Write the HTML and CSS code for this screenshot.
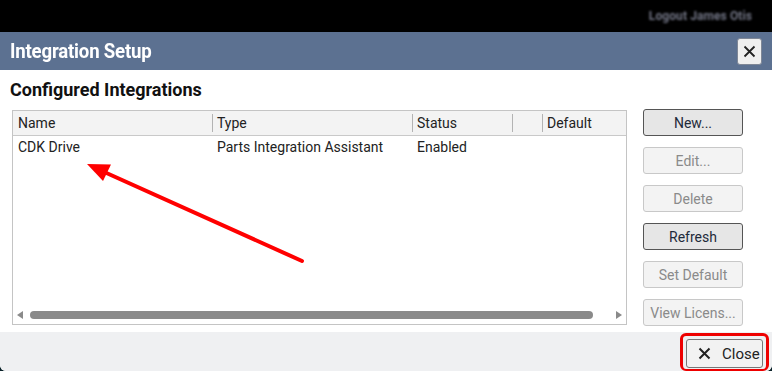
FILE: index.html
```html
<!DOCTYPE html>
<html lang="en">
<head>
  <meta charset="UTF-8">
  <title>Integration Setup</title>
  <link rel="stylesheet" href="styles.css">
</head>
<body>
  <div class="topbar">
    <span class="user">Logout James Otis</span>
  </div>

  <div class="dialog">
    <div class="titlebar">
      <h1><span>Integration Setup</span></h1>
      <button class="x-btn" aria-label="Close">
        <svg width="13" height="13" viewBox="0 0 13 13"><path d="M1.5 1.5 L11.5 11.5 M11.5 1.5 L1.5 11.5" stroke="#222" stroke-width="1.8" fill="none"/></svg>
      </button>
    </div>

    <div class="content">
      <h2>Configured Integrations</h2>
      <div class="main">
        <div class="grid">
          <div class="grid-head">
            <div class="col c-name">Name</div>
            <div class="col c-type">Type</div>
            <div class="col c-status">Status</div>
            <div class="col c-blank"></div>
            <div class="col c-default">Default</div>
          </div>
          <div class="grid-body">
            <div class="row">
              <div class="col c-name">CDK Drive</div>
              <div class="col c-type">Parts Integration Assistant</div>
              <div class="col c-status">Enabled</div>
              <div class="col c-blank"></div>
              <div class="col c-default"></div>
            </div>
          </div>
          <div class="hscroll">
            <span class="arrow-l"></span>
            <span class="thumb"></span>
            <span class="arrow-r"></span>
          </div>
        </div>

        <div class="actions">
          <button class="btn">New...</button>
          <button class="btn" disabled>Edit...</button>
          <button class="btn" disabled>Delete</button>
          <button class="btn">Refresh</button>
          <button class="btn" disabled>Set Default</button>
          <button class="btn" disabled>View Licens...</button>
        </div>
      </div>
    </div>

    <div class="footer">
      <div class="highlight">
        <button class="close-btn">
          <svg width="13" height="13" viewBox="0 0 13 13"><path d="M1.5 1.5 L11.5 11.5 M11.5 1.5 L1.5 11.5" stroke="#222" stroke-width="2" fill="none"/></svg>
          Close
        </button>
      </div>
    </div>
  </div>

  <svg class="callout" width="772" height="371" viewBox="0 0 772 371">
    <line x1="302" y1="261" x2="102" y2="171" stroke="#f00" stroke-width="4" stroke-linecap="round"/>
    <polygon points="87,164 111,164.5 103,181" fill="#f00"/>
  </svg>
</body>
</html>
```

FILE: styles.css
```css
* {
  margin: 0;
  padding: 0;
  box-sizing: border-box;
}

body {
  width: 772px;
  height: 371px;
  overflow: hidden;
  background: #0b2229;
  font-family: Roboto, "Liberation Sans", sans-serif;
  font-size: 14px;
  color: #222;
}

.topbar {
  height: 32px;
  background: #000;
  display: flex;
  justify-content: flex-end;
  align-items: center;
  padding: 0 20px 0 0;
}

.topbar .user {
  color: #737686;
  font-size: 12px;
  font-weight: 700;
  letter-spacing: 0.1px;
  filter: blur(0.9px);
}

.dialog {
  height: 339px;
  background: #fff;
  display: flex;
  flex-direction: column;
  border-radius: 0 0 6px 6px;
  overflow: hidden;
}

.titlebar {
  height: 38px;
  background: #5c7191;
  display: flex;
  align-items: center;
  justify-content: space-between;
  padding: 0 10px 0 10px;
}

.titlebar h1 {
  color: #fff;
  font-size: 20px;
  font-weight: 700;
  line-height: 24px;
}

.titlebar h1 span {
  display: inline-block;
  transform: scaleX(0.93);
  transform-origin: left center;
  letter-spacing: -0.2px;
}

.x-btn {
  width: 25px;
  height: 27px;
  margin-top: 1px;
  background: #efefef;
  border: 1px solid #7f8796;
  border-radius: 3px;
  display: flex;
  align-items: center;
  justify-content: center;
}

.content {
  flex: 1;
  padding: 10px 10px 0 12px;
}

.content h2 {
  font-size: 18px;
  font-weight: 700;
  line-height: 20px;
  margin: 0 0 10px -2px;
  color: #111;
}

.main {
  display: flex;
  gap: 16px;
}

.grid {
  width: 615px;
  height: 215px;
  border: 1px solid #c4c4c4;
  display: flex;
  flex-direction: column;
}

.grid-head {
  height: 25px;
  background: #f3f3f3;
  border-bottom: 1px solid #c9c9c9;
  display: flex;
}

.grid-head .col {
  line-height: 24px;
  position: relative;
}

.grid-head .col + .col::before {
  content: "";
  position: absolute;
  left: 0;
  top: 3px;
  height: 18px;
  border-left: 1px solid #b3b3b3;
}

.col {
  padding-left: 5px;
  white-space: nowrap;
  overflow: hidden;
}

.c-name { width: 199px; }
.c-type { width: 200px; }
.c-status { width: 100px; }
.c-blank { width: 30px; }
.c-default { flex: 1; }

.grid-body {
  flex: 1;
}

.row {
  display: flex;
  height: 22px;
  line-height: 22px;
}

.hscroll {
  height: 14px;
  margin-bottom: 2px;
  display: flex;
  align-items: center;
  padding: 0 4px 0 4px;
}

.arrow-l {
  width: 0;
  height: 0;
  border-top: 4px solid transparent;
  border-bottom: 4px solid transparent;
  border-right: 6px solid #8a8a8a;
}

.thumb {
  height: 8px;
  width: 563px;
  margin: 0 23px 0 7px;
  background: #8a8a8a;
  border-radius: 4px;
}

.arrow-r {
  width: 0;
  height: 0;
  border-top: 4px solid transparent;
  border-bottom: 4px solid transparent;
  border-left: 6px solid #8a8a8a;
}

.actions {
  display: flex;
  flex-direction: column;
  gap: 11px;
  margin-top: -1px;
}

.btn {
  width: 100px;
  height: 27px;
  font-family: inherit;
  font-size: 14px;
  color: #1e2a3a;
  background: #e6e6e6;
  border: 1px solid #555;
  border-radius: 3px;
}

.btn:disabled {
  color: #8a8a8a;
  background: #f3f3f3;
  border-color: #c8c8c8;
}

.footer {
  height: 39px;
  background: #eff0f2;
  display: flex;
  justify-content: flex-end;
  align-items: flex-end;
  padding: 0 3px 0 0;
}

.highlight {
  border: 3px solid #ee0000;
  border-bottom-width: 2px;
  border-radius: 6px;
  padding: 3px 3px 1px 3px;
}

.close-btn {
  width: 77px;
  height: 29px;
  font-family: inherit;
  font-size: 15px;
  color: #222;
  background: #f2f2f2;
  border: 1px solid #777;
  border-radius: 3px;
  display: flex;
  align-items: center;
  gap: 11px;
  padding-left: 11px;
}

.callout {
  position: absolute;
  left: 0;
  top: 0;
  pointer-events: none;
}
```
